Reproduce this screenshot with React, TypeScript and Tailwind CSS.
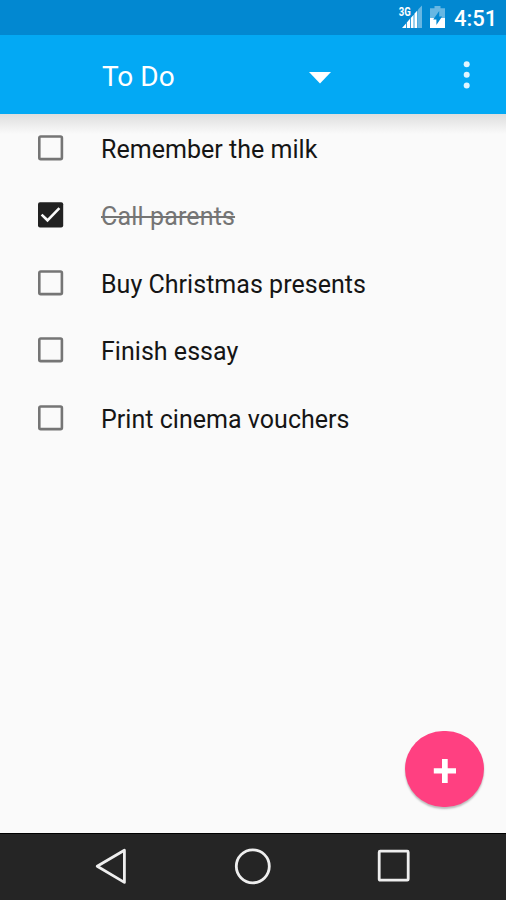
import { useState } from 'react';

interface Task {
  id: number;
  title: string;
  done: boolean;
}

const initialTasks: Task[] = [
  { id: 1, title: 'Remember the milk', done: false },
  { id: 2, title: 'Call parents', done: true },
  { id: 3, title: 'Buy Christmas presents', done: false },
  { id: 4, title: 'Finish essay', done: false },
  { id: 5, title: 'Print cinema vouchers', done: false },
];

function StatusBar() {
  return (
    <div className="flex h-[35px] shrink-0 items-center justify-end bg-[#0288d1] pr-[9px] text-white">
      {/* Signal */}
      <svg width="24" height="24" viewBox="0 0 24 24" className="mb-[2px] mr-[8px]">
        <path d="M20 4.6 24 0.6V23h-4z" fill="#fff" fillOpacity=".4" />
        <path d="M4 23h4v-4.4zM8.8 23h3.2v-9.2l-3.2 3.8zM12.8 23h2.8V9.8l-2.8 3.2zM16.4 23h2.9V5.4l-2.9 3.4z" fill="#fff" />
        <text x="0.8" y="10.6" fill="#fff" fontSize="12.5" fontWeight="700" textLength="12" lengthAdjust="spacingAndGlyphs">
          3G
        </text>
      </svg>
      {/* Battery */}
      <svg width="15" height="22" viewBox="0 0 15 22" className="mb-[1px] mr-[9px]">
        <path d="M4.5 0h6v2.2H15V12H0V2.2h4.5z" fill="#fff" fillOpacity=".4" />
        <path d="M0 12h15v10H0z" fill="#fff" />
        <path d="M9.2 5v5.6h2.9L6.4 19v-5.4H3.2z" fill="#0288d1" />
      </svg>
      <span className="mt-[3px] w-[43px] whitespace-nowrap text-[22px] font-medium leading-none">4:51</span>
    </div>
  );
}

function Toolbar() {
  return (
    <header className="flex h-[79px] shrink-0 items-center bg-[#03a9f4] pl-[102px] pr-[35px] text-white">
      <button className="flex w-[229px] items-center justify-between">
        <span className="mt-[4px] text-[28px] leading-none">To Do</span>
        <svg width="22" height="12" viewBox="0 0 22 12" className="mt-[6px]">
          <path d="M0 0h22L11 11.5z" fill="#fff" />
        </svg>
      </button>
      <button aria-label="More options" className="ml-auto">
        <svg width="8" height="28" viewBox="0 0 8 28" fill="#e1f5fe">
          <circle cx="3.7" cy="3.2" r="3" />
          <circle cx="3.7" cy="13.8" r="3" />
          <circle cx="3.7" cy="24.4" r="3" />
        </svg>
      </button>
    </header>
  );
}

function Checkbox({ checked }: { checked: boolean }) {
  return (
    <svg width="26" height="26" viewBox="0 0 26 26" className="shrink-0">
      {checked ? (
        <>
          <rect x="0" y="0.2" width="25.2" height="25.2" rx="2" fill="#212121" />
          <path d="m3.6 12.6 5.9 5.7L21.4 6.2" fill="none" stroke="#fafafa" strokeWidth="2.6" />
        </>
      ) : (
        <rect x="1.3" y="1.5" width="22.6" height="22.6" rx="1.4" fill="none" stroke="#757575" strokeWidth="2.6" />
      )}
    </svg>
  );
}

function TaskRow({ task, onToggle }: { task: Task; onToggle: () => void }) {
  return (
    <li className="flex h-[67.5px] items-center pl-[38px]">
      <button role="checkbox" aria-checked={task.done} aria-label={task.title} onClick={onToggle}>
        <Checkbox checked={task.done} />
      </button>
      <span
        className={
          task.done
            ? 'ml-[37px] mt-[3px] text-[25px] leading-none tracking-[0.15px] text-[#757575] line-through decoration-[1.5px]'
            : 'ml-[37px] mt-[3px] text-[25px] leading-none tracking-[0.03px] text-[#151515]'
        }
      >
        {task.title}
      </span>
    </li>
  );
}

function NavBar() {
  return (
    <nav className="flex h-[67px] shrink-0 items-center justify-between border-t border-black bg-[#252525] px-[95px]">
      <svg width="32" height="38" viewBox="0 0 32 38" fill="none" stroke="#eee" strokeWidth="2.8" strokeLinejoin="round">
        <path d="M2.2 18.3 29.4 2.2v32.2z" />
      </svg>
      <svg width="38" height="38" viewBox="0 0 38 38" fill="none" stroke="#eee" strokeWidth="2.8">
        <circle cx="19.8" cy="18.3" r="16.5" />
      </svg>
      <svg width="34" height="38" viewBox="0 0 34 38" fill="none" stroke="#eee" strokeWidth="2.8" strokeLinejoin="round">
        <rect x="2.2" y="3.2" width="29" height="29" rx="1" />
      </svg>
    </nav>
  );
}

export default function App() {
  const [tasks, setTasks] = useState(initialTasks);

  const toggle = (id: number) =>
    setTasks((prev) => prev.map((t) => (t.id === id ? { ...t, done: !t.done } : t)));

  return (
    <div className="flex h-[900px] w-[506px] flex-col overflow-hidden bg-[#fafafa] font-[Roboto,sans-serif]">
      <StatusBar />
      <Toolbar />
      <main className="relative flex-1">
        {/* Toolbar shadow */}
        <div className="absolute inset-x-0 top-0 h-[20px] bg-linear-to-b from-[#dedede] to-[#fafafa]" />
        <ul className="relative">
          {tasks.map((task) => (
            <TaskRow key={task.id} task={task} onToggle={() => toggle(task.id)} />
          ))}
        </ul>
        <button
          aria-label="Add task"
          className="absolute bottom-[26px] right-[22px] flex h-[76px] w-[79px] items-center justify-center rounded-full bg-[#ff4081] shadow-[0_2px_2px_rgba(0,0,0,0.25)]"
        >
          <svg width="24" height="26" viewBox="0 0 24 26" className="mt-[3px]">
            <path d="M9 1h5.7v9.2H23v5.2h-8.3V25H9v-9.6H.8v-5.2H9z" fill="#fff" />
          </svg>
        </button>
      </main>
      <NavBar />
    </div>
  );
}
